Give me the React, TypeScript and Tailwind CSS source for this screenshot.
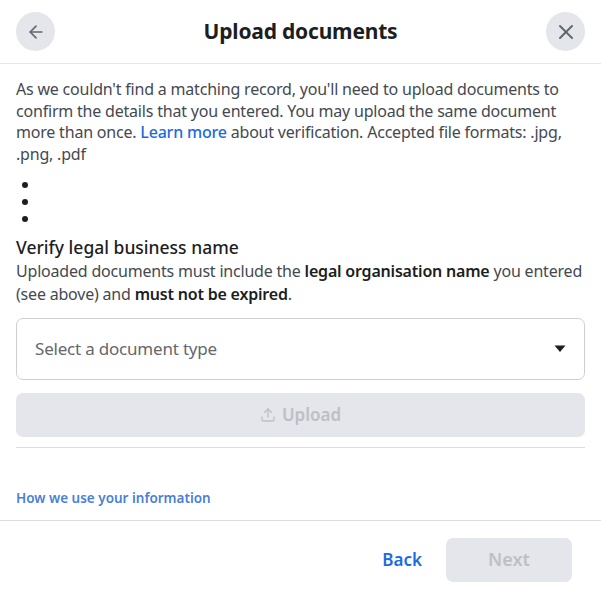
import { ArrowLeft, X, Upload } from "lucide-react";

export default function App() {
  return (
    <div
      className="w-[601px] h-[600px] bg-white flex flex-col text-[#1c1e21] overflow-hidden"
      style={{ fontFamily: '"Noto Sans", "Open Sans", sans-serif' }}
    >
      {/* Header */}
      <div className="h-[64px] shrink-0 flex items-center justify-between px-4 border-b border-[#e4e6eb]">
        <button className="w-[39px] h-[39px] rounded-full bg-[#e4e6eb] flex items-center justify-center">
          <ArrowLeft className="w-5 h-5 text-[#606770]" strokeWidth={2} />
        </button>
        <h1 className="text-[21px] font-bold tracking-[-0.2px]">Upload documents</h1>
        <button className="w-[39px] h-[39px] rounded-full bg-[#e4e6eb] flex items-center justify-center">
          <X className="w-6 h-6 text-[#606770]" strokeWidth={2} />
        </button>
      </div>

      {/* Body */}
      <div className="flex-1 px-4 pt-[15px]">
        <p className="text-[16px] leading-[21.5px] text-[#444950] tracking-[-0.2px]">
          As we couldn't find a matching record, you'll need to upload documents to confirm the
          details that you entered. You may upload the same document more than once.{" "}
          <span className="text-[#1b6ce0] font-medium">Learn more</span> about verification.
          Accepted file formats: .jpg, .png, .pdf
        </p>

        <ul className="mt-[17px] ml-[6px] flex flex-col gap-[11px]">
          <li className="w-[6px] h-[6px] rounded-full bg-[#1c1e21]" />
          <li className="w-[6px] h-[6px] rounded-full bg-[#1c1e21]" />
          <li className="w-[6px] h-[6px] rounded-full bg-[#1c1e21]" />
        </ul>

        <h2 className="mt-[13px] text-[17.5px] font-medium leading-[24px]">Verify legal business name</h2>
        <p className="mt-[1px] text-[16px] leading-[23px] text-[#444950] tracking-[-0.2px]">
          Uploaded documents must include the{" "}
          <span className="font-semibold text-[#1c1e21]">legal organisation name</span> you entered
          (see above) and <span className="font-semibold text-[#1c1e21]">must not be expired</span>.
        </p>

        <div className="mt-[12px] h-[62px] rounded-[7px] border border-[#ccd0d5] flex items-center justify-between pl-[18px] pr-[18px]">
          <span className="text-[17px] text-[#65676b] tracking-[-0.2px]">Select a document type</span>
          <svg width="12" height="8" viewBox="0 0 12 8" className="text-[#1c1e21]">
            <path d="M0.5 0.5 H11.5 L6 7 Z" fill="currentColor" />
          </svg>
        </div>

        <button className="mt-[13px] w-full h-[44px] rounded-[7px] bg-[#e4e6eb] flex items-center justify-center gap-[6px] text-[#bcc0c4]">
          <Upload className="w-[16px] h-[16px]" strokeWidth={2} />
          <span className="text-[17px] font-semibold">Upload</span>
        </button>

        <div className="mt-[10px] border-t border-[#dadde1]" />

        <a className="block mt-[40px] text-[13.5px] font-semibold text-[#4a7fd6]">How we use your information</a>
      </div>

      {/* Footer */}
      <div className="h-[80px] shrink-0 border-t border-[#dadde1] flex items-center justify-end gap-[24px] pr-[29px] pb-[2px]">
        <span className="text-[17px] font-semibold text-[#1b6ce0]">Back</span>
        <button className="w-[126px] h-[44px] rounded-[7px] bg-[#e4e6eb] text-[18px] font-semibold text-[#bcc0c4]">
          Next
        </button>
      </div>
    </div>
  );
}
